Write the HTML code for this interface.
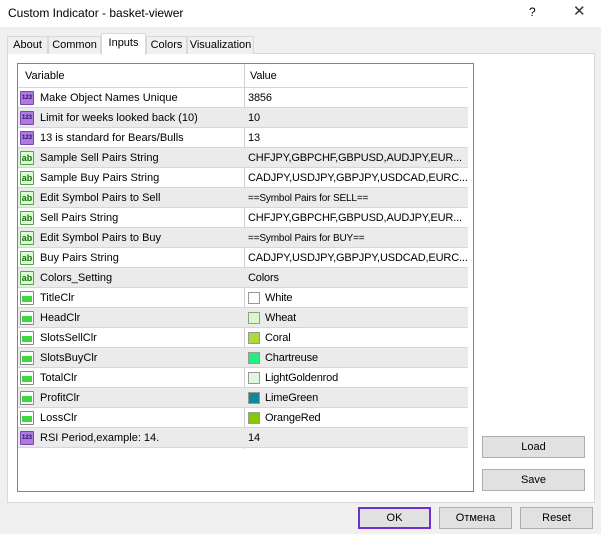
<!DOCTYPE html><html><head><style>
*{margin:0;padding:0;box-sizing:border-box}
body{width:601px;height:534px;background:#f0f0f0;font-family:"Liberation Sans",sans-serif;font-size:11px;color:#000;position:relative;overflow:hidden}
.a{position:absolute}
.tb{left:0;top:0;width:601px;height:27px;background:#fff}
.tab{position:absolute;top:36px;height:18px;border:1px solid #d9d9d9;border-bottom:none;background:#f0f0f0;text-align:center;line-height:17px;font-size:11px}
.row{position:absolute;left:18px;width:450px;height:20px;border-bottom:1px solid #d6d6d6;line-height:21px;white-space:nowrap}
.g{background:#ebebeb}
.n{position:absolute;left:22px}
.v{position:absolute;left:230px;width:220px;overflow:hidden;letter-spacing:-0.15px}
.div{position:absolute;left:244px;top:64px;width:1px;height:385px;background:#cfcfcf}
.ic{position:absolute;left:2px;top:3px;width:14px;height:14px;border-radius:1px;font-size:6px;line-height:12px;text-align:center;font-weight:bold}
.p{background:#b07ae0;border:1px solid #7a45b0;color:#2a0d6a}
.t{background:#d8ffd0;border:1px solid #5aa050;color:#1c6a12;font-size:9px;line-height:12px}
.c{background:#fff;border:1px solid #888;}
.c:after{content:"";position:absolute;left:1px;top:4px;width:10px;height:6px;background:#3ed83e}
.sw{position:absolute;left:0px;top:4px;width:12px;height:12px;border:1px solid #999}
.btn{position:absolute;height:22px;border:1px solid #adadad;background:#e1e1e1;text-align:center;line-height:21px;font-size:11px}
.v span{margin-left:17px}
</style></head><body>
<div class="a tb"></div>
<div class="a" style="left:8px;top:6px;font-size:12px">Custom Indicator - basket-viewer</div>
<div class="a" style="left:529px;top:5px;font-size:12px">?</div>
<div class="a" style="left:573px;top:2px;font-size:15px;color:#333">✕</div>
<div class="a" style="left:7px;top:53px;width:588px;height:450px;background:#fff;border:1px solid #d9d9d9"></div>
<div class="tab" style="left:7px;width:41px">About</div>
<div class="tab" style="left:48px;width:53px">Common</div>
<div class="tab" style="left:101px;width:45px;top:33px;height:22px;background:#fff;line-height:19px">Inputs</div>
<div class="tab" style="left:146px;width:41px">Colors</div>
<div class="tab" style="left:187px;width:67px">Visualization</div>
<div class="a" style="left:17px;top:63px;width:457px;height:429px;border:1px solid #828282;background:#fff"></div>
<div class="row" style="top:64px;height:24px;line-height:25px"><span style="position:absolute;left:7px">Variable</span><span class="v" style="left:232px">Value</span></div>
<div class="div"></div>
<div class="row" style="top:88px"><div class="ic p">123</div><span class="n">Make Object Names Unique</span><span class="v">3856</span></div>
<div class="row g" style="top:108px"><div class="ic p">123</div><span class="n">Limit for weeks looked back (10)</span><span class="v">10</span></div>
<div class="row" style="top:128px"><div class="ic p">123</div><span class="n">13 is standard for Bears/Bulls</span><span class="v">13</span></div>
<div class="row g" style="top:148px"><div class="ic t">ab</div><span class="n">Sample Sell Pairs String</span><span class="v">CHFJPY,GBPCHF,GBPUSD,AUDJPY,EUR...</span></div>
<div class="row" style="top:168px"><div class="ic t">ab</div><span class="n">Sample Buy Pairs String</span><span class="v">CADJPY,USDJPY,GBPJPY,USDCAD,EURC...</span></div>
<div class="row g" style="top:188px"><div class="ic t">ab</div><span class="n">Edit Symbol Pairs to Sell</span><span class="v" style="font-size:10px">==Symbol Pairs for SELL==</span></div>
<div class="row" style="top:208px"><div class="ic t">ab</div><span class="n">Sell Pairs String</span><span class="v">CHFJPY,GBPCHF,GBPUSD,AUDJPY,EUR...</span></div>
<div class="row g" style="top:228px"><div class="ic t">ab</div><span class="n">Edit Symbol Pairs to Buy</span><span class="v" style="font-size:10px">==Symbol Pairs for BUY==</span></div>
<div class="row" style="top:248px"><div class="ic t">ab</div><span class="n">Buy Pairs String</span><span class="v">CADJPY,USDJPY,GBPJPY,USDCAD,EURC...</span></div>
<div class="row g" style="top:268px"><div class="ic t">ab</div><span class="n">Colors_Setting</span><span class="v">Colors</span></div>
<div class="row" style="top:288px"><div class="ic c"></div><span class="n">TitleClr</span><span class="v"><i class="sw" style="background:#fff"></i><span>White</span></span></div>
<div class="row g" style="top:308px"><div class="ic c"></div><span class="n">HeadClr</span><span class="v"><i class="sw" style="background:#d8f8c8"></i><span>Wheat</span></span></div>
<div class="row" style="top:328px"><div class="ic c"></div><span class="n">SlotsSellClr</span><span class="v"><i class="sw" style="background:#b0d838"></i><span>Coral</span></span></div>
<div class="row g" style="top:348px"><div class="ic c"></div><span class="n">SlotsBuyClr</span><span class="v"><i class="sw" style="background:#20f080"></i><span>Chartreuse</span></span></div>
<div class="row" style="top:368px"><div class="ic c"></div><span class="n">TotalClr</span><span class="v"><i class="sw" style="background:#e0f8e0"></i><span>LightGoldenrod</span></span></div>
<div class="row g" style="top:388px"><div class="ic c"></div><span class="n">ProfitClr</span><span class="v"><i class="sw" style="background:#108898"></i><span>LimeGreen</span></span></div>
<div class="row" style="top:408px"><div class="ic c"></div><span class="n">LossClr</span><span class="v"><i class="sw" style="background:#88c800"></i><span>OrangeRed</span></span></div>
<div class="row g" style="top:428px"><div class="ic p">123</div><span class="n">RSI Period,example: 14.</span><span class="v">14</span></div>
<div class="btn" style="left:482px;top:436px;width:103px">Load</div>
<div class="btn" style="left:482px;top:469px;width:103px">Save</div>
<div class="btn" style="left:358px;top:507px;width:73px;border:2px solid #7030d0;line-height:19px">OK</div>
<div class="btn" style="left:439px;top:507px;width:73px">Отмена</div>
<div class="btn" style="left:520px;top:507px;width:73px">Reset</div>
</body></html>
